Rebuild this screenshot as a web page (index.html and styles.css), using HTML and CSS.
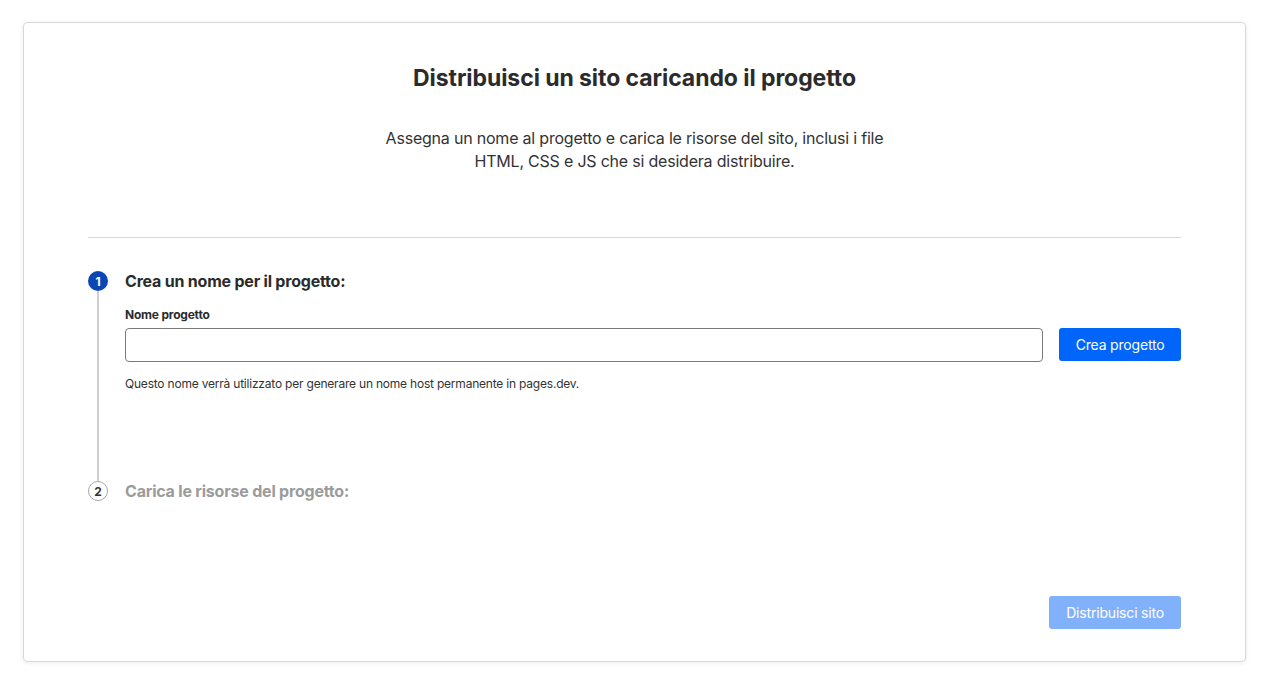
FILE: index.html
```html
<!DOCTYPE html>
<html lang="it">

<head>
	<meta charset="UTF-8">
	<title>Distribuisci un sito</title>
	<link rel="stylesheet" href="styles.css">
</head>

<body>
	<div class="upload-card">
		<div class="upload-header">
			<h1>Distribuisci un sito caricando il progetto</h1>
			<p>Assegna un nome al progetto e carica le risorse del sito, inclusi i file HTML, CSS e JS che si desidera distribuire.</p>
		</div>

		<div class="steps">
			<div class="step step-active">
				<div class="step-marker">
					<span class="step-num">1</span>
					<span class="step-line"></span>
				</div>
				<div class="step-body">
					<h2>Crea un nome per il progetto:</h2>
					<label for="projectName">Nome progetto</label>
					<div class="name-row">
						<input type="text" id="projectName">
						<button class="btn-primary">Crea progetto</button>
					</div>
					<p class="help-text">Questo nome verrà utilizzato per generare un nome host permanente in pages.dev.</p>
				</div>
			</div>

			<div class="step step-pending">
				<div class="step-marker">
					<span class="step-num">2</span>
				</div>
				<div class="step-body">
					<h2>Carica le risorse del progetto:</h2>
				</div>
			</div>
		</div>

		<div class="upload-footer">
			<button class="btn-primary" disabled>Distribuisci sito</button>
		</div>
	</div>
</body>

</html>
```

FILE: styles.css
```css
body {
	font-family: Inter, "Noto Sans", Arial, sans-serif;
	letter-spacing: -0.013em;
	margin: 0;
	padding: 22px 21px 18px 23px;
	background-color: #fff;
	color: #313131;
}

.upload-card {
	border: 1px solid #d9d9d9;
	border-radius: 4px;
	box-shadow: 0 1px 4px rgba(0, 0, 0, 0.08);
	padding: 41px 64px 32px 64px;
}

.upload-header {
	text-align: center;
	border-bottom: 1px solid #d9d9d9;
	padding-bottom: 64px;
}

	.upload-header h1 {
		margin: 0;
		font-size: 23px;
		line-height: 28px;
		font-weight: 700;
		letter-spacing: -0.003em;
		color: #2b2b2b;
	}

	.upload-header p {
		margin: 35px auto 0;
		max-width: 510px;
		font-size: 16px;
		line-height: 23px;
		color: #333;
	}

.steps {
	padding-top: 33px;
}

.step {
	display: flex;
	gap: 17px;
}

.step-marker {
	width: 20px;
	display: flex;
	flex-direction: column;
	align-items: center;
}

.step-num {
	width: 20px;
	height: 20px;
	border-radius: 50%;
	box-sizing: border-box;
	display: flex;
	align-items: center;
	justify-content: center;
	font-size: 12px;
	font-weight: 700;
	flex-shrink: 0;
}

.step-line {
	flex: 1;
	width: 2px;
	background-color: #cfcfcf;
}

.step-active .step-num {
	background-color: #0a47b5;
	color: #fff;
}

.step-pending .step-num {
	border: 1px solid #a8a8a8;
	color: #333;
	background-color: #fff;
}

.step-body {
	flex: 1;
}

	.step-body h2 {
		margin: 0;
		font-size: 16px;
		line-height: 20px;
		font-weight: 700;
		color: #2b2b2b;
	}

.step-active .step-body {
	padding-bottom: 89px;
}

.step-pending .step-body h2 {
	color: #9b9b9b;
}

.step-body label {
	display: block;
	margin-top: 16px;
	font-size: 12px;
	line-height: 16px;
	font-weight: 700;
	color: #2b2b2b;
}

.name-row {
	display: flex;
	gap: 16px;
	margin-top: 5px;
}

	.name-row input {
		flex: 1;
		height: 34px;
		box-sizing: border-box;
		border: 1px solid #7a7a7a;
		border-radius: 4px;
		padding: 0 10px;
		font-family: inherit;
		font-size: 14px;
		outline: none;
	}

.btn-primary {
	background-color: #0065f8;
	color: #fff;
	border: none;
	border-radius: 3px;
	height: 33px;
	padding: 0 16.5px;
	font-family: inherit;
	font-size: 14px;
	letter-spacing: -0.013em;
	cursor: pointer;
}

	.btn-primary:disabled {
		background-color: #82b1fb;
		padding: 0 17px;
		cursor: default;
	}

.help-text {
	margin: 14px 0 0;
	font-size: 12px;
	line-height: 16px;
	color: #333;
}

.upload-footer {
	display: flex;
	justify-content: flex-end;
	margin-top: 95px;
}
```
